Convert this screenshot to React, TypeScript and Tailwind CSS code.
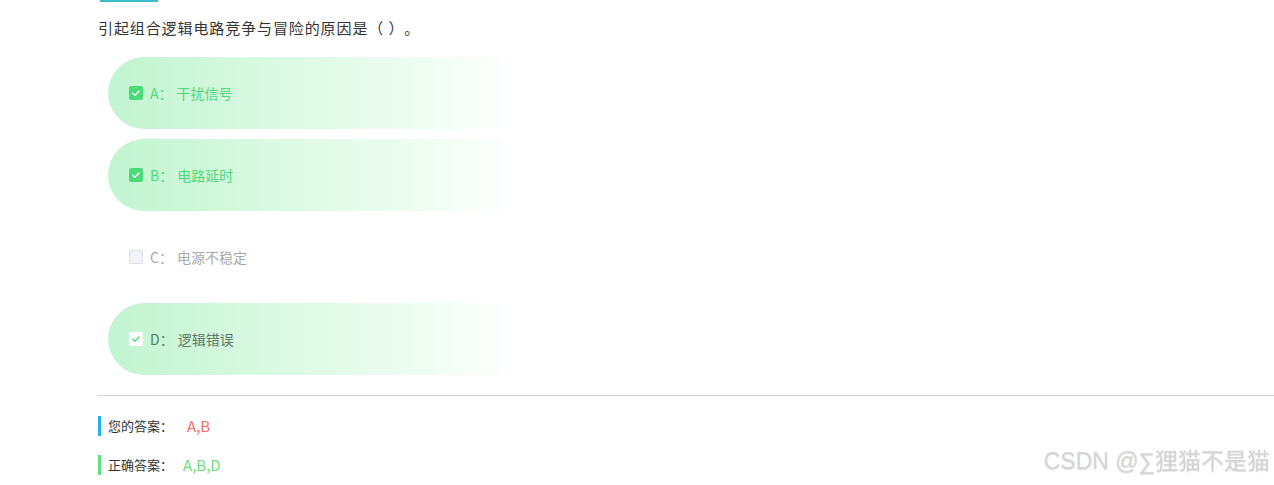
const options = [
  { key: 'A', text: '干扰信号', state: 'picked' },
  { key: 'B', text: '电路延时', state: 'picked' },
  { key: 'C', text: '电源不稳定', state: 'none' },
  { key: 'D', text: '逻辑错误', state: 'missed' },
];

function Box({ state }: { state: string }) {
  if (state === 'none') {
    return <span className="w-[14px] h-[14px] rounded-[2px] border border-[#dcdfe6] bg-[#f2f3f8]" />;
  }
  const picked = state === 'picked';
  return (
    <span
      className={`w-[14px] h-[14px] rounded-[2px] flex items-center justify-center ${
        picked ? 'bg-[#4cd97a]' : 'bg-white'
      }`}
    >
      <svg className="w-[10px] h-[10px]" viewBox="0 0 12 12" fill="none">
        <path
          d="M2.2 6.3l2.4 2.4 5.2-5.2"
          stroke={picked ? '#fff' : '#4cd97a'}
          strokeWidth="1.7"
          strokeLinecap="round"
          strokeLinejoin="round"
        />
      </svg>
    </span>
  );
}

export default function App() {
  return (
    <div className="relative w-[1274px] h-[485px] bg-white overflow-hidden font-['Microsoft_YaHei','Noto_Sans_CJK_SC',sans-serif] text-[#333] [text-spacing-trim:space-all]">
      <div className="pl-[98px]">
        <div className="ml-[2px] w-[58px] h-[2px] bg-[#3bbdc7]" />
        <p className="mt-[16px] h-[20px] text-[15px] leading-[20px] tracking-[0.9px]">引起组合逻辑电路竞争与冒险的原因是（ ）。</p>

        <div className="mt-[19px] pl-[10px] flex flex-col gap-[10px]">
          {options.map((o) => (
            <div
              key={o.key}
              className={`w-[392px] h-[72px] rounded-l-full flex items-center gap-[7px] pl-[21px] text-[14px] ${
                o.state === 'none' ? '' : 'bg-gradient-to-r from-[#c4f5d2] from-5% to-[#fbfffc]'
              } ${o.state === 'picked' ? 'text-[#4cd97a]' : o.state === 'missed' ? 'text-[#5d7a66]' : 'text-[#aaaaaa]'}`}
            >
              <Box state={o.state} />
              <span>
                {o.key}：<span className="ml-[4px]">{o.text}</span>
              </span>
            </div>
          ))}
        </div>

        <div className="mt-[20px] h-px bg-[#d0d0d0]" />

        <div className="mt-[20px] flex items-center h-[20px] border-l-[3px] border-[#1fb0ef] pl-[7px] text-[13px]">
          您的答案：<span className="ml-[14px] text-[#f56c6c] text-[15px]">A,B</span>
        </div>
        <div className="mt-[19px] flex items-center h-[20px] border-l-[3px] border-[#5de27a] pl-[7px] text-[13px]">
          正确答案：<span className="ml-[10px] text-[#6ae17e] text-[15px]">A,B,D</span>
        </div>
      </div>

      <div className="absolute right-[4px] bottom-[7px] text-[23px] font-normal text-[#d6d6d6] font-['Liberation_Sans','Noto_Sans_CJK_SC',sans-serif] [text-shadow:0_1px_1px_rgba(0,0,0,0.12)]">
        CSDN @∑狸猫不是猫
      </div>
    </div>
  );
}
